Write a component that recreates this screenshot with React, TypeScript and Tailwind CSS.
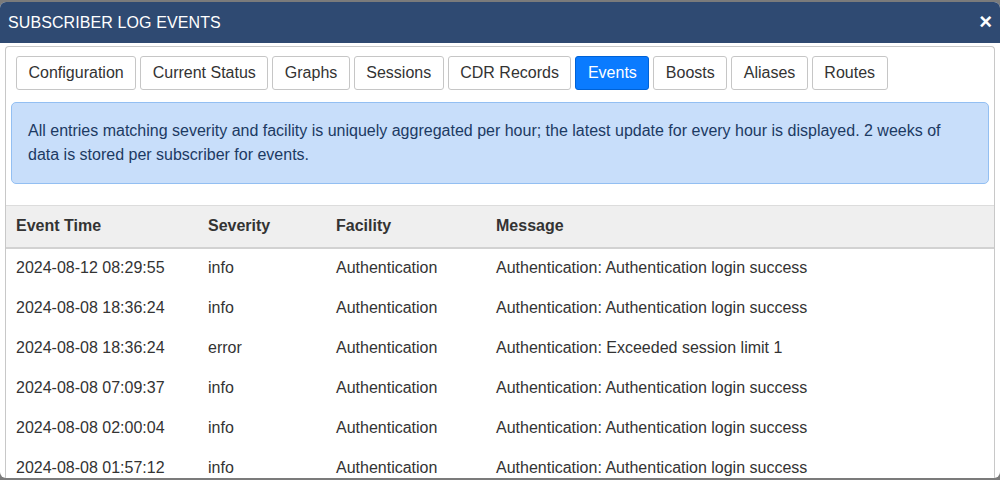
const tabs = [
  'Configuration',
  'Current Status',
  'Graphs',
  'Sessions',
  'CDR Records',
  'Events',
  'Boosts',
  'Aliases',
  'Routes',
];

const events = [
  { time: '2024-08-12 08:29:55', severity: 'info', facility: 'Authentication', message: 'Authentication: Authentication login success' },
  { time: '2024-08-08 18:36:24', severity: 'info', facility: 'Authentication', message: 'Authentication: Authentication login success' },
  { time: '2024-08-08 18:36:24', severity: 'error', facility: 'Authentication', message: 'Authentication: Exceeded session limit 1' },
  { time: '2024-08-08 07:09:37', severity: 'info', facility: 'Authentication', message: 'Authentication: Authentication login success' },
  { time: '2024-08-08 02:00:04', severity: 'info', facility: 'Authentication', message: 'Authentication: Authentication login success' },
  { time: '2024-08-08 01:57:12', severity: 'info', facility: 'Authentication', message: 'Authentication: Authentication login success' },
];

const App = () => {
  const active = 'Events';

  return (
    <div
      className="h-[480px] w-[1000px] overflow-hidden bg-[#7b7b7b] pt-[2px]"
      style={{ fontFamily: '"Liberation Sans", Arial, sans-serif' }}
    >
      <div className="flex h-[476px] flex-col overflow-hidden rounded-[6px] bg-white">
        {/* header */}
        <div className="flex h-[41px] shrink-0 items-center justify-between bg-[#2f4a72] pl-2 pr-[8px] text-white">
          <span className="text-[16px] tracking-[0.1px]">SUBSCRIBER LOG EVENTS</span>
          <span className="mt-[-1px] text-[22px] font-bold leading-none">×</span>
        </div>

        {/* body */}
        <div className="flex min-h-0 flex-1 flex-col px-[5px] pt-[3px]">
          <div className="flex min-h-0 flex-1 flex-col overflow-hidden rounded-t-[4px] border border-b-0 border-[#c8c8c8]">
            <div className="flex gap-[4px] px-[10px] pt-[9px]">
              {tabs.map((tab) => (
                <button
                  key={tab}
                  className={
                    tab === active
                      ? 'h-[34px] rounded-[3px] border border-[#0062d6] bg-[#0a7bff] px-[11.5px] text-[16px] text-white'
                      : 'h-[34px] rounded-[3px] border border-[#c6c6c6] bg-white px-[11.5px] text-[16px] text-[#333]'
                  }
                >
                  {tab}
                </button>
              ))}
            </div>

            <div className="mx-[5px] mt-[12px] rounded-[5px] border border-[#93bff2] bg-[#c8defa] px-4 py-4 text-[16px] leading-[24px] text-[#1c3a63]">
              All entries matching severity and facility is uniquely aggregated per hour; the latest update for every hour is
              displayed. 2 weeks of data is stored per subscriber for events.
            </div>

            <table className="mt-[21px] w-full border-collapse text-left text-[16px] text-[#333]">
              <thead>
                <tr className="h-[42px] border-t border-b-2 border-t-[#dcdcdc] border-b-[#d2d2d2] bg-[#efefef]">
                  <th className="w-[192px] pl-[10px] font-bold">Event Time</th>
                  <th className="w-[128px] pl-[10px] font-bold">Severity</th>
                  <th className="w-[160px] pl-[10px] font-bold">Facility</th>
                  <th className="pl-[10px] font-bold">Message</th>
                </tr>
              </thead>
              <tbody>
                {events.map((e, i) => (
                  <tr key={i} className="h-[40px]">
                    <td className="pl-[10px]">{e.time}</td>
                    <td className="pl-[10px]">{e.severity}</td>
                    <td className="pl-[10px]">{e.facility}</td>
                    <td className="pl-[10px]">{e.message}</td>
                  </tr>
                ))}
              </tbody>
            </table>
          </div>
        </div>
      </div>
    </div>
  );
};

export default App;
